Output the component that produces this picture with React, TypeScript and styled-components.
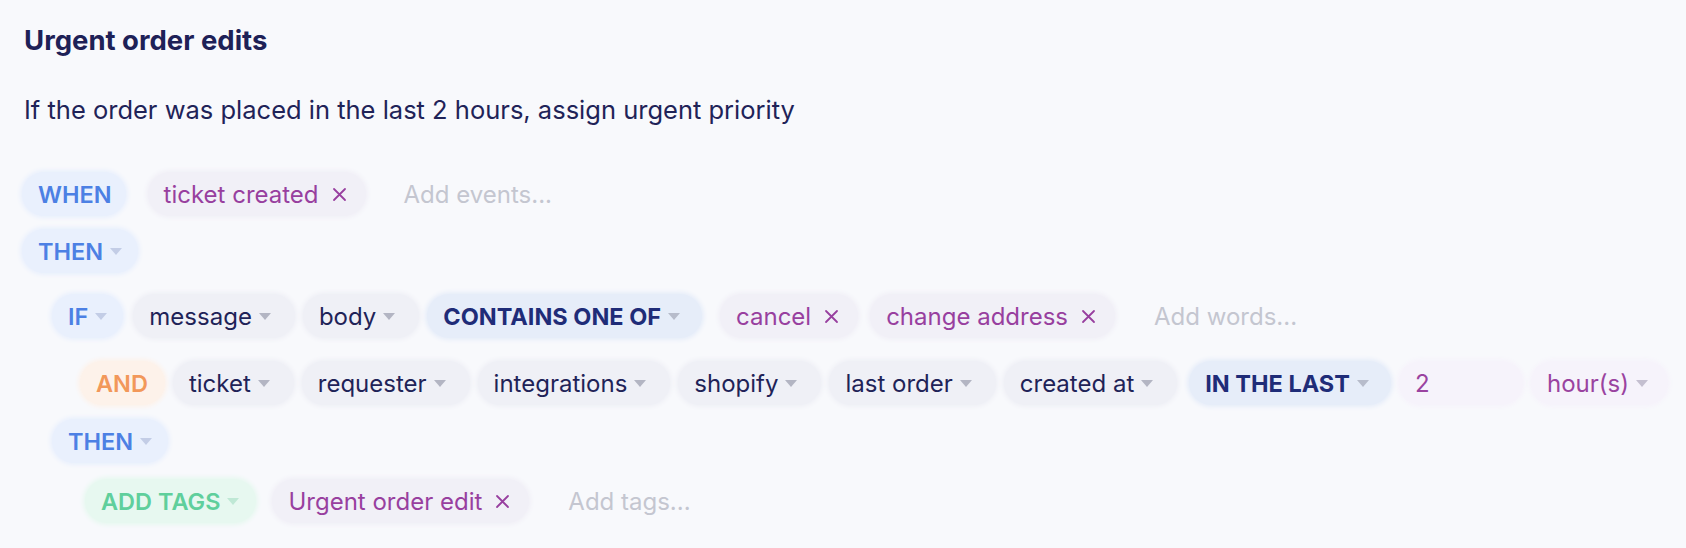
import React from "react";
import styled, { createGlobalStyle, css } from "styled-components";

const Global = createGlobalStyle`
  html, body { margin: 0; padding: 0; background: #f8f9fc; }
  body { font-family: Inter, "Noto Sans", sans-serif; -webkit-font-smoothing: antialiased; }
`;

type Tone = "key" | "plain" | "op" | "tag" | "and" | "value" | "green";

const tones: Record<
  Tone,
  { bg: string; fg: string; caret: string; weight: number; size: number; padR: number }
> = {
  key: { bg: "#e9f0fd", fg: "#4c80e4", caret: "#c3cde6", weight: 600, size: 23.5, padR: 16 },
  plain: { bg: "#eff0f6", fg: "#1f2358", caret: "#b3b5c3", weight: 400, size: 24, padR: 24 },
  op: { bg: "#e6edf9", fg: "#1f2c78", caret: "#b7bccb", weight: 700, size: 23.5, padR: 22 },
  tag: { bg: "#f1f0f7", fg: "#983f9f", caret: "#b7b9c6", weight: 400, size: 24, padR: 19 },
  and: { bg: "#fdf2ea", fg: "#f2985a", caret: "#f3cfb2", weight: 600, size: 23.5, padR: 17 },
  value: { bg: "#f6f3fb", fg: "#9a43a0", caret: "#c4bfd0", weight: 400, size: 24, padR: 20 },
  green: { bg: "#e7f8f0", fg: "#5fcf9c", caret: "#bfe8d5", weight: 600, size: 23.5, padR: 17 },
};

const Page = styled.div`
  padding: 24px 22px 20px 22px;
  color: #1f2358;
`;

const Title = styled.h1`
  margin: 0;
  font-size: 27.5px;
  line-height: 32px;
  font-weight: 700;
  color: #1e2157;
  padding-left: 2px;
`;

const Description = styled.p`
  margin: 38px 0 0 0;
  font-size: 25.5px;
  line-height: 32px;
  color: #1f2358;
  padding-left: 2px;
`;

const Rule = styled.div`
  margin-top: 45px;
  display: flex;
  flex-direction: column;
  gap: 11px;
`;

const Nested = styled.div<{ $indent: number }>`
  display: flex;
  flex-direction: column;
  padding-left: ${(p) => p.$indent}px;
`;

const Row = styled.div<{ $space?: number }>`
  display: flex;
  align-items: center;
  gap: 8px;
  height: 46px;
  margin-top: ${(p) => p.$space ?? 0}px;
`;

const Pill = styled.div<{ $tone: Tone; $width?: number; $gapAfter?: number; $tight?: boolean }>`
  display: inline-flex;
  align-items: center;
  height: 44px;
  border-radius: 22px;
  padding-left: 16px;
  white-space: nowrap;
  box-sizing: border-box;
  flex: none;
  ${(p) => css`
    padding-right: ${p.$tight ? 14 : tones[p.$tone].padR}px;
    font-size: ${tones[p.$tone].size}px;
    background: ${tones[p.$tone].bg};
    color: ${tones[p.$tone].fg};
    font-weight: ${tones[p.$tone].weight};
    box-shadow: 0 0 4px 2px ${tones[p.$tone].bg};
    margin-right: ${p.$gapAfter ?? 0}px;
  `}
  ${(p) =>
    p.$width &&
    css`
      width: ${p.$width}px;
    `}
`;

const Caret = styled.span<{ $color: string }>`
  display: inline-block;
  width: 0;
  height: 0;
  margin-left: 7px;
  border-left: 6px solid transparent;
  border-right: 6px solid transparent;
  border-top: 7px solid ${(p) => p.$color};
`;

const Remove = styled.svg`
  margin-left: 13px;
  width: 15px;
  height: 15px;
  flex: none;
`;

const Placeholder = styled.span`
  font-size: 24px;
  color: #c4c6d0;
  padding-left: 16px;
  white-space: nowrap;
`;

function X() {
  return (
    <Remove viewBox="0 0 15 15">
      <path d="M2 2 L13 13 M13 2 L2 13" stroke="currentColor" strokeWidth="1.8" strokeLinecap="round" fill="none" />
    </Remove>
  );
}

function Select({ tone, children, gapAfter }: { tone: Tone; children: React.ReactNode; gapAfter?: number }) {
  return (
    <Pill $tone={tone} $gapAfter={gapAfter}>
      {children}
      <Caret $color={tones[tone].caret} />
    </Pill>
  );
}

function Chip({ children, gapAfter }: { children: React.ReactNode; gapAfter?: number }) {
  return (
    <Pill $tone="tag" $gapAfter={gapAfter}>
      {children}
      <X />
    </Pill>
  );
}

export default function App() {
  return (
    <Page>
      <Global />
      <Title>Urgent order edits</Title>
      <Description>If the order was placed in the last 2 hours, assign urgent priority</Description>
      <Rule>
        <Row>
          <Pill $tone="key" $tight $gapAfter={14}>WHEN</Pill>
          <Chip gapAfter={14}>ticket created</Chip>
          <Placeholder>Add events...</Placeholder>
        </Row>
        <Row>
          <Select tone="key">THEN</Select>
        </Row>
        <Nested $indent={30}>
          <Row $space={8}>
            <Select tone="key" gapAfter={2}>IF</Select>
            <Select tone="plain">message</Select>
            <Select tone="plain">body</Select>
            <Select tone="op" gapAfter={10}>CONTAINS ONE OF</Select>
            <Chip gapAfter={4}>cancel</Chip>
            <Chip gapAfter={15}>change address</Chip>
            <Placeholder>Add words...</Placeholder>
          </Row>
          <Nested $indent={28}>
            <Row $space={21}>
              <Pill $tone="and">AND</Pill>
              <Select tone="plain">ticket</Select>
              <Select tone="plain">requester</Select>
              <Select tone="plain">integrations</Select>
              <Select tone="plain">shopify</Select>
              <Select tone="plain">last order</Select>
              <Select tone="plain" gapAfter={4}>created at</Select>
              <Select tone="op">IN THE LAST</Select>
              <Pill $tone="value" $width={124}>2</Pill>
              <Select tone="value">hour(s)</Select>
            </Row>
          </Nested>
          <Row $space={12}>
            <Select tone="key">THEN</Select>
          </Row>
          <Nested $indent={33}>
            <Row $space={14}>
              <Select tone="green" gapAfter={8}>ADD TAGS</Select>
              <Chip gapAfter={15}>Urgent order edit</Chip>
              <Placeholder>Add tags...</Placeholder>
            </Row>
          </Nested>
        </Nested>
      </Rule>
    </Page>
  );
}
